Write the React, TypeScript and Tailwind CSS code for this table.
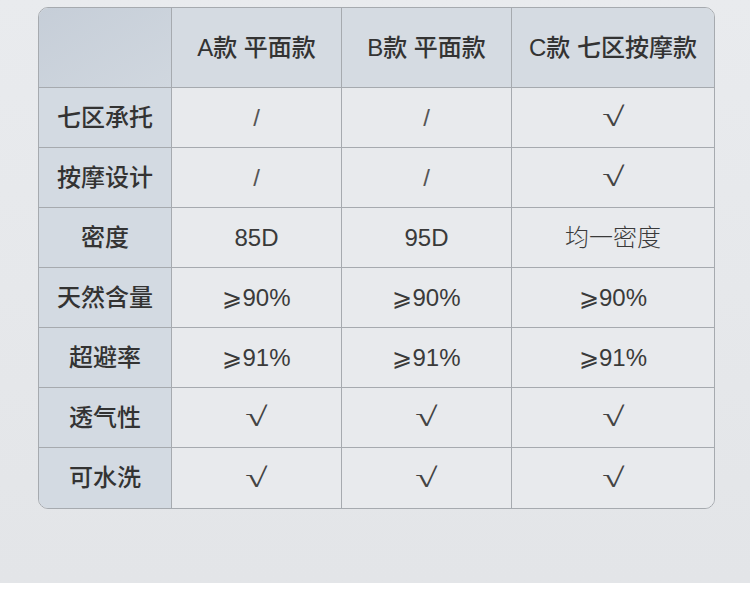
import React from "react";

// dados da tabela comparativa
const headers = ["A款 平面款", "B款 平面款", "C款 七区按摩款"];

const rows: { label: string; values: string[] }[] = [
  { label: "七区承托", values: ["/", "/", "√"] },
  { label: "按摩设计", values: ["/", "/", "√"] },
  { label: "密度", values: ["85D", "95D", "均一密度"] },
  { label: "天然含量", values: ["⩾90%", "⩾90%", "⩾90%"] },
  { label: "超避率", values: ["⩾91%", "⩾91%", "⩾91%"] },
  { label: "透气性", values: ["√", "√", "√"] },
  { label: "可水洗", values: ["√", "√", "√"] },
];

const font = { fontFamily: '"Liberation Sans", "Noto Sans CJK SC", sans-serif' };

// renderiza o valor da célula (o √ usa uma fonte serifada, mais fina e alargada)
function Value({ v }: { v: string }) {
  if (v === "√") {
    return (
      <span className="inline-block scale-x-[1.5] text-[27px] leading-none font-['Liberation_Serif'] text-[#444]">
        √
      </span>
    );
  }
  if (v === "/") {
    return <span className="text-[24px] font-light text-[#555]">/</span>;
  }
  return <span>{v}</span>;
}

export default function App() {
  return (
    <div className="w-[750px] h-[589px] flex flex-col bg-white" style={font}>
      <div className="h-[583px] bg-gradient-to-b from-[#e9ebee] to-[#e3e5e8] pt-[7px] pl-[38px]">
        <div className="w-[677px] border border-[#a6aaaf] rounded-[10px] overflow-hidden grid grid-cols-[133px_170px_170px_1fr] text-[#333]">
          {/* cabeçalho */}
          <div className="h-[80px] bg-gradient-to-br from-[#c6ced8] to-[#d0d7df] border-r border-b border-[#a6aaaf]" />
          {headers.map((h, i) => (
            <div
              key={h}
              className={`h-[80px] flex items-center justify-center text-[24px] font-medium bg-[#d5dbe2] border-b border-[#a6aaaf] ${
                i < headers.length - 1 ? "border-r" : ""
              }`}
            >
              {h}
            </div>
          ))}

          {/* linhas */}
          {rows.map((row, r) => {
            const last = r === rows.length - 1;
            return (
              <React.Fragment key={row.label}>
                <div
                  className={`h-[60px] flex items-center justify-center text-[24px] font-medium bg-[#d3dae2] border-r border-[#a6aaaf] ${
                    last ? "" : "border-b"
                  }`}
                >
                  {row.label}
                </div>
                {row.values.map((v, i) => (
                  <div
                    key={i}
                    className={`h-[60px] flex items-center justify-center text-[24px] font-light text-[#3a3a3a] bg-[#e8eaed] border-[#a6aaaf] ${
                      last ? "" : "border-b"
                    } ${i < 2 ? "border-r" : ""}`}
                  >
                    <Value v={v} />
                  </div>
                ))}
              </React.Fragment>
            );
          })}
        </div>
      </div>
    </div>
  );
}
